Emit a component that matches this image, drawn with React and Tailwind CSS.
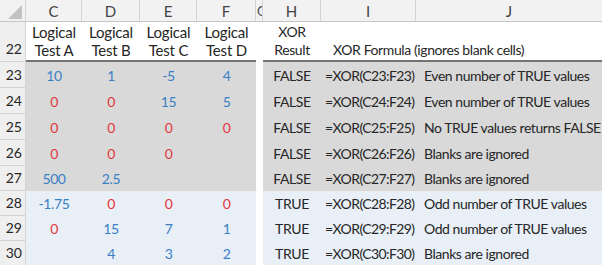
const cols = [
  { key: "C", w: "w-[56px]" },
  { key: "D", w: "w-[58px]" },
  { key: "E", w: "w-[57px]" },
  { key: "F", w: "w-[59px]" },
];

// cell value colours: b = blue, r = red
const rows = [
  { n: 23, band: "gray", v: [["10", "b"], ["1", "b"], ["-5", "b"], ["4", "b"]], res: "FALSE", note: "Even number of TRUE values" },
  { n: 24, band: "gray", v: [["0", "r"], ["0", "r"], ["15", "b"], ["5", "b"]], res: "FALSE", note: "Even number of TRUE values" },
  { n: 25, band: "gray", v: [["0", "r"], ["0", "r"], ["0", "r"], ["0", "r"]], res: "FALSE", note: "No TRUE values returns FALSE" },
  { n: 26, band: "gray", v: [["0", "r"], ["0", "r"], ["0", "r"], null], res: "FALSE", note: "Blanks are ignored" },
  { n: 27, band: "gray", v: [["500", "b"], ["2.5", "b"], null, null], res: "FALSE", note: "Blanks are ignored" },
  { n: 28, band: "blue", v: [["-1.75", "b"], ["0", "r"], ["0", "r"], ["0", "r"]], res: "TRUE", note: "Odd number of TRUE values" },
  { n: 29, band: "blue", v: [["0", "r"], ["15", "b"], ["7", "b"], ["1", "b"]], res: "TRUE", note: "Odd number of TRUE values" },
  { n: 30, band: "blue", v: [null, ["4", "b"], ["3", "b"], ["2", "b"]], res: "TRUE", note: "Blanks are ignored" },
];

function RowHead({ children, className = "" }) {
  return (
    <div
      className={`w-[26px] shrink-0 bg-[#efefef] border-r border-b border-[#d4d4d4] flex items-end justify-end pr-[3px] pb-[3px] text-[#262626] tracking-normal ${className}`}
    >
      {children}
    </div>
  );
}

function DataRow({ row, h }) {
  const bg = row.band === "gray" ? "bg-[#d9d9d9]" : "bg-[#e8eff7]";
  return (
    <div className={`flex ${h}`}>
      <RowHead>{row.n}</RowHead>
      {cols.map((c, i) => {
        const cell = row.v[i];
        return (
          <div key={c.key} className={`${c.w} shrink-0 ${bg} flex items-end justify-center pb-[3px]`}>
            {cell && (
              <span className={cell[1] === "b" ? "text-[#3a80c6]" : "text-[#e0383e]"}>{cell[0]}</span>
            )}
          </div>
        );
      })}
      <div className="w-[7px] shrink-0 bg-white" />
      <div className={`flex-1 ${bg} flex items-end pb-[3px] text-[#262626]`}>
        <div className="w-[58px] shrink-0 text-center">{row.res}</div>
        <div className="w-[95px] shrink-0 pl-[4px] whitespace-nowrap tracking-[-0.6px]">=XOR(C{row.n}:F{row.n})</div>
        <div className="pl-[8px] whitespace-nowrap tracking-[-0.45px]">{row.note}</div>
      </div>
    </div>
  );
}

export default function App() {
  const heights = ["h-[26px]", "h-[26px]", "h-[26px]", "h-[26px]", "h-[25px]", "h-[25px]", "h-[25px]", "h-[25px]"];
  return (
    <div
      className="w-[602px] h-[265px] overflow-hidden bg-white text-[14px] leading-[18px] tracking-[-0.4px]"
      style={{ fontFamily: "Lato, 'Open Sans', sans-serif" }}
    >
      {/* column letters */}
      <div className="flex h-[22px] bg-[#f2f2f2] border-b border-[#c6c6c6] text-[#444] text-[15px] tracking-normal">
        <div className="w-[26px] shrink-0 border-r border-[#d4d4d4] relative">
          <svg className="absolute left-[8px] top-[5px]" width="14" height="14" viewBox="0 0 14 14">
            <polygon points="14,0 14,14 0,14" fill="#c2c2c2" />
          </svg>
        </div>
        {cols.map((c) => (
          <div key={c.key} className={`${c.w} shrink-0 border-r border-[#d4d4d4] flex items-center justify-center`}>
            {c.key}
          </div>
        ))}
        <div className="w-[7px] shrink-0 border-r border-[#d4d4d4] overflow-hidden flex items-center pl-[1px] text-[13px]">G</div>
        <div className="w-[58px] shrink-0 border-r border-[#d4d4d4] flex items-center justify-center">H</div>
        <div className="w-[95px] shrink-0 border-r border-[#d4d4d4] flex items-center justify-center">I</div>
        <div className="flex-1 flex items-center justify-center">J</div>
      </div>

      {/* header row 22 */}
      <div className="flex h-[40px] text-[#262626]">
        <RowHead>22</RowHead>
        <div className="flex border-b-2 border-[#737373]">
          {["A", "B", "C", "D"].map((l, i) => (
            <div key={l} className={`${cols[i].w} shrink-0 flex flex-col items-center justify-end pb-[1px] text-[15px] tracking-[-0.2px]`}>
              <span>Logical</span>
              <span>Test {l}</span>
            </div>
          ))}
        </div>
        <div className="w-[7px] shrink-0" />
        <div className="flex-1 flex border-b-2 border-[#737373]">
          <div className="w-[58px] shrink-0 flex flex-col items-center justify-end pb-[1px]">
            <span>XOR</span>
            <span>Result</span>
          </div>
          <div className="flex items-end pl-[12px] pb-[1px] whitespace-nowrap">
            XOR Formula (ignores blank cells)
          </div>
        </div>
      </div>

      {rows.map((r, i) => (
        <DataRow key={r.n} row={r} h={heights[i]} />
      ))}
    </div>
  );
}
